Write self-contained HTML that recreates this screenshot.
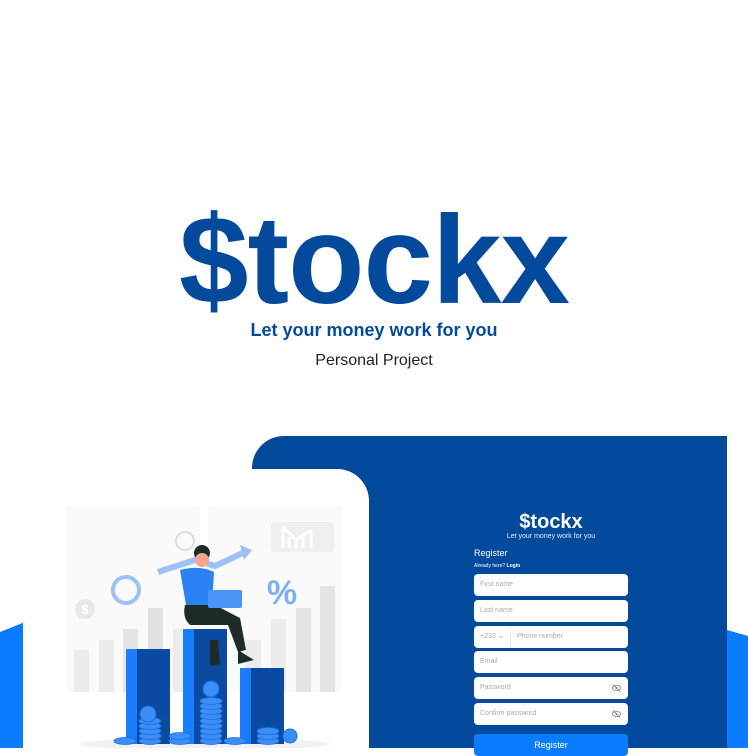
<!DOCTYPE html>
<html><head><meta charset="utf-8"><style>
*{margin:0;padding:0;box-sizing:border-box}
body{width:748px;height:748px;background:#fff;position:relative;overflow:hidden;font-family:"Liberation Sans",sans-serif}
.abs{position:absolute}
.logo{left:0;width:748px;top:186px;text-align:center;font-size:125px;font-weight:bold;color:#044a9c;line-height:150px;letter-spacing:-1px}
.tag{left:0;width:748px;top:320px;text-align:center;font-size:18px;font-weight:bold;color:#044a9c}
.pp{left:0;width:748px;top:352px;text-align:center;font-size:16px;color:#222}
.inp{position:absolute;left:474px;width:154px;height:22px;background:#fff;border-radius:4px;font-size:7px;color:#aaa;padding-left:6px;line-height:22px}
.eye{position:absolute;right:7px;top:7px;width:9px;height:8px}
</style></head><body>
<div class="abs" style="left:0;top:620px;width:30px;height:128px;background:#0a7cff;clip-path:polygon(0 12px,100% 0,100% 100%,0 100%)"></div>
<div class="abs" style="left:720px;top:628px;width:28px;height:120px;background:#0a7cff;clip-path:polygon(0 0,100% 8px,100% 100%,0 100%)"></div>
<div class="abs" style="left:252px;top:436px;width:475px;height:312px;background:#044a9c;border-top-left-radius:32px"></div>
<div class="abs" style="left:23px;top:469px;width:346px;height:279px;background:#fff;border-top-right-radius:32px"></div>
<div class="abs logo">$tockx</div>
<div class="abs tag">Let your money work for you</div>
<div class="abs pp">Personal Project</div>
<svg class="abs" style="left:23px;top:500px" width="346" height="248" viewBox="23 500 346 248">
<defs><g id="c"><ellipse cx="0" cy="0" rx="11" ry="3.5" fill="#3a8ef5" stroke="#1e6ee0" stroke-width="0.8"/></g></defs>
<rect x="66" y="506" width="134" height="186" fill="#fafafa" rx="3"/>
<rect x="208" y="506" width="134" height="186" fill="#fafafa" rx="3"/>
<rect x="74" y="650" width="15" height="42" fill="#ececec"/>
<rect x="99" y="640" width="15" height="52" fill="#ececec"/>
<rect x="123" y="629" width="15" height="63" fill="#e4e4e4"/>
<rect x="148" y="608" width="15" height="84" fill="#e0e0e0"/>
<rect x="173" y="629" width="15" height="63" fill="#ececec"/>
<rect x="246" y="640" width="15" height="52" fill="#ececec"/>
<rect x="271" y="619" width="15" height="73" fill="#ececec"/>
<rect x="296" y="608" width="15" height="84" fill="#e4e4e4"/>
<rect x="320" y="586" width="15" height="106" fill="#e4e4e4"/>
<rect x="271" y="522" width="63" height="30" fill="#efefef" rx="4"/>
<path d="M283 527 L283 548 M289 537 L289 548 M296 540 L296 548 M303 535 L303 548 M311 530 L311 548 M283 527 L296 540 L311 530" stroke="#fff" stroke-width="3" fill="none"/>
<circle cx="85" cy="609" r="10" fill="#e8e8e8"/><text x="85" y="614" font-size="13" text-anchor="middle" fill="#fff" font-weight="bold">$</text>
<circle cx="126" cy="590" r="13" fill="none" stroke="#9ec1f5" stroke-width="4"/>
<circle cx="185" cy="541" r="9" fill="none" stroke="#ddd" stroke-width="2"/>
<path d="M158 572 L195 560 L215 566 L245 552" stroke="#9ec1f5" stroke-width="6" fill="none"/>
<polygon points="240,545 252,550 244,560" fill="#9ec1f5"/>
<text x="282" y="604" font-size="34" text-anchor="middle" fill="#7fb0f5" font-weight="bold">%</text>
<ellipse cx="205" cy="744" rx="125" ry="6" fill="#f1f1f1"/>
<rect x="126" y="649" width="44" height="95" fill="#0a4aa0"/><rect x="126" y="649" width="11" height="95" fill="#1a7cff"/>
<rect x="183" y="629" width="44" height="115" fill="#0a4aa0"/><rect x="183" y="629" width="11" height="115" fill="#1a7cff"/>
<rect x="240" y="668" width="44" height="76" fill="#0a4aa0"/><rect x="240" y="668" width="11" height="76" fill="#1a7cff"/>
<use href="#c" x="150" y="741"/><use href="#c" x="150" y="736"/><use href="#c" x="150" y="731"/><use href="#c" x="150" y="726"/><use href="#c" x="150" y="721"/>
<circle cx="148" cy="714" r="8" fill="#3a8ef5" stroke="#1e6ee0"/>
<use href="#c" x="211" y="741"/><use href="#c" x="211" y="736"/><use href="#c" x="211" y="731"/><use href="#c" x="211" y="726"/><use href="#c" x="211" y="721"/><use href="#c" x="211" y="716"/><use href="#c" x="211" y="711"/><use href="#c" x="211" y="706"/><use href="#c" x="211" y="701"/>
<circle cx="211" cy="689" r="8" fill="#3a8ef5" stroke="#1e6ee0"/>
<use href="#c" x="268" y="741"/><use href="#c" x="268" y="736"/><use href="#c" x="268" y="731"/>
<circle cx="290" cy="736" r="7" fill="#3a8ef5" stroke="#1e6ee0"/>
<use href="#c" x="125" y="741"/><use href="#c" x="180" y="741"/><use href="#c" x="235" y="741"/><use href="#c" x="180" y="736"/>
<circle cx="202" cy="553" r="8" fill="#1e2b2b"/><circle cx="202" cy="560" r="7" fill="#f6a58c"/>
<path d="M180 570 Q200 565 214 572 L212 605 L186 605 Z" fill="#2b82f5"/>
<path d="M185 605 L215 605 L240 618 L246 650 L238 652 L228 625 L190 625 Q182 618 185 605Z" fill="#1e2b2b"/>
<path d="M238 650 L254 660 L238 664 Z" fill="#1e2b2b"/>
<rect x="208" y="590" width="34" height="18" rx="2" fill="#4a94f5"/>
<path d="M210 640 L218 640 L220 664 L210 666Z" fill="#1e2b2b"/>
</svg>
<div class="abs" style="left:474px;top:511px;width:154px;text-align:center;color:#fff;font-size:20px;font-weight:bold">$tockx</div>
<div class="abs" style="left:474px;top:533px;width:154px;text-align:center;color:#e8eefc;font-size:7px">Let your money work for you</div>
<div class="abs" style="left:474px;top:548px;color:#fff;font-size:9px">Register</div>
<div class="abs" style="left:474px;top:563px;color:#fff;font-size:5px">Already here? <b>Login</b></div>
<div class="inp" style="top:574px">First name</div>
<div class="inp" style="top:600px">Last name</div>
<div class="inp" style="top:626px">+233 ⌄<span style="position:absolute;left:36px;top:0;border-left:1px solid #eee;padding-left:6px">Phone number</span></div>
<div class="inp" style="top:651px">Email</div>
<div class="inp" style="top:677px">Password<svg class="eye" viewBox="0 0 10 8"><ellipse cx="5" cy="4" rx="4.5" ry="3" fill="none" stroke="#888" stroke-width="1"/><circle cx="5" cy="4" r="1.3" fill="#888"/><path d="M1 0 L9 8" stroke="#888"/></svg></div>
<div class="inp" style="top:703px">Confirm password<svg class="eye" viewBox="0 0 10 8"><ellipse cx="5" cy="4" rx="4.5" ry="3" fill="none" stroke="#888" stroke-width="1"/><circle cx="5" cy="4" r="1.3" fill="#888"/><path d="M1 0 L9 8" stroke="#888"/></svg></div>
<div class="abs" style="left:474px;top:734px;width:154px;height:22px;background:#0a7cff;border-radius:4px;color:#fff;font-size:9px;text-align:center;line-height:22px">Register</div>
</body></html>
